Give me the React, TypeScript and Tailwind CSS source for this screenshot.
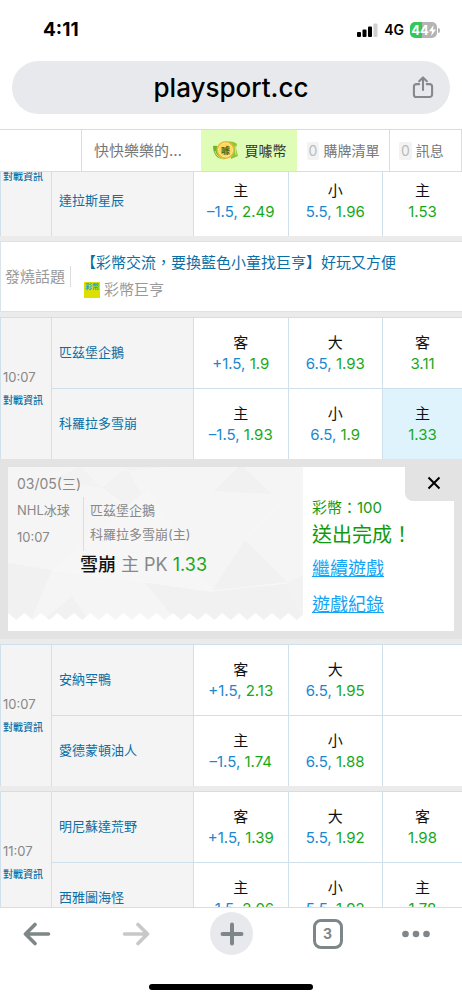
interface Pick {
  side: string;
  line?: string;
  odds: string;
  selected?: boolean;
}
interface TeamRow {
  name: string;
  picks: (Pick | null)[];
}
interface Game {
  id: string;
  time?: string;
  rows: TeamRow[];
}

const games: Game[] = [
  {
    id: "stars",
    rows: [
      {
        name: "達拉斯星辰",
        picks: [
          { side: "主", line: "–1.5", odds: "2.49" },
          { side: "小", line: "5.5", odds: "1.96" },
          { side: "主", odds: "1.53" },
        ],
      },
    ],
  },
  {
    id: "avalanche",
    time: "10:07",
    rows: [
      {
        name: "匹茲堡企鵝",
        picks: [
          { side: "客", line: "+1.5", odds: "1.9" },
          { side: "大", line: "6.5", odds: "1.93" },
          { side: "客", odds: "3.11" },
        ],
      },
      {
        name: "科羅拉多雪崩",
        picks: [
          { side: "主", line: "–1.5", odds: "1.93" },
          { side: "小", line: "6.5", odds: "1.9" },
          { side: "主", odds: "1.33", selected: true },
        ],
      },
    ],
  },
  {
    id: "oilers",
    time: "10:07",
    rows: [
      {
        name: "安納罕鴨",
        picks: [{ side: "客", line: "+1.5", odds: "2.13" }, { side: "大", line: "6.5", odds: "1.95" }, null],
      },
      {
        name: "愛德蒙頓油人",
        picks: [{ side: "主", line: "–1.5", odds: "1.74" }, { side: "小", line: "6.5", odds: "1.88" }, null],
      },
    ],
  },
  {
    id: "kraken",
    time: "11:07",
    rows: [
      {
        name: "明尼蘇達荒野",
        picks: [
          { side: "客", line: "+1.5", odds: "1.39" },
          { side: "大", line: "5.5", odds: "1.92" },
          { side: "客", odds: "1.98" },
        ],
      },
      {
        name: "西雅圖海怪",
        picks: [
          { side: "主", line: "–1.5", odds: "2.06" },
          { side: "小", line: "5.5", odds: "1.92" },
          { side: "主", odds: "1.78" },
        ],
      },
    ],
  },
];

function StatusBar() {
  return (
    <div className="flex h-[60px] items-center justify-between pr-[22px] pl-[43px]">
      <span className="text-[19px] font-bold">4:11</span>
      <div className="flex items-center gap-[6px]">
        <svg width="21" height="14" viewBox="0 0 21 14">
          <rect x="0" y="9" width="4" height="5" rx="1" />
          <rect x="5.5" y="6.5" width="4" height="7.5" rx="1" />
          <rect x="11" y="3.5" width="4" height="10.5" rx="1" />
          <rect x="16.5" y="0.5" width="4" height="13.5" rx="1" fill="#d0d0d0" />
        </svg>
        <span className="text-sm font-semibold">4G</span>
        <div className="flex items-center gap-px">
          <div className="flex h-4 w-[27px] items-center justify-center rounded-[5px] bg-linear-to-r from-[#35c759] from-45% to-[#b4b4b4] to-45% text-white">
            <span className="text-[13px] leading-4 font-bold">44</span>
            <svg width="7" height="11" viewBox="0 0 7 11" fill="currentColor">
              <path d="M4.6 0 0 6.2h3L2.2 11 7 4.6H4z" />
            </svg>
          </div>
          <span className="h-[5px] w-[2px] rounded-r bg-[#b4b4b4]" />
        </div>
      </div>
    </div>
  );
}

function AddressBar() {
  return (
    <div className="mx-3 mt-px flex h-[53px] items-center rounded-full bg-[#e8e9ed] pr-4 pl-[38px]">
      <span className="flex-1 text-center text-[26px] font-medium">playsport.cc</span>
      <button aria-label="分享">
        <svg width="22" height="23" viewBox="0 0 23 24" fill="none" stroke="#85898e" strokeWidth="2.200" strokeLinecap="round" strokeLinejoin="round">
          <path d="M7.500 8.500H4.500A2.500 2.500 0 0 0 2 11v8.500A2.500 2.500 0 0 0 4.500 22h14a2.500 2.500 0 0 0 2.500-2.500V11a2.500 2.500 0 0 0-2.500-2.500h-3" />
          <path d="M11.500 14.500V2M7.500 5.500l4-4 4 4" />
        </svg>
      </button>
    </div>
  );
}

function CoinIcon() {
  return (
    <svg width="27" height="21" viewBox="0 0 27 21">
      <path d="M1 6c4-1 6 0 9 3l4 10C6 20 1 15 1 6z" fill="#6fb52c" />
      <path d="M15 2c4-1 8 0 10 2l-1 4 2 8-7 3z" fill="#8cc63a" />
      <path d="M3 11c1 4 4 7 9 8M23 6l1 9" stroke="#d8ef6a" fill="none" />
      <circle cx="13.500" cy="10" r="9" fill="#f2b632" />
      <circle cx="13.500" cy="10" r="7" fill="#ffd85c" stroke="#fbe99b" />
      <text x="13.500" y="13.500" textAnchor="middle" fontSize="9" fontWeight="bold" fill="#4b6a1c">噱</text>
    </svg>
  );
}

function SiteNav() {
  return (
    <nav className="flex h-[43px] border-y border-[#dcdcdc] text-sm text-[#777]">
      <div className="w-[82px] border-r border-[#dcdcdc]" />
      <a href="#me" className="flex flex-1 items-center pl-3 text-[15px]">快快樂樂的…</a>
      <a href="#coin" className="flex w-[96px] items-center justify-center gap-[6px] bg-[#e0fdb8] text-[#333]">
        <CoinIcon />
        買噱幣
      </a>
      <a href="#cart" className="flex w-[93px] items-center justify-center gap-1 border-r border-[#dcdcdc]">
        <span className="rounded-xs bg-[#f3f3f3] px-[2px] leading-[18px] text-[#bbb]">0</span>
        購牌清單
      </a>
      <a href="#inbox" className="flex w-[72px] items-center gap-1 border-r border-[#dcdcdc] pl-[9px]">
        <span className="rounded-xs bg-[#f3f3f3] px-[2px] leading-[18px] text-[#bbb]">0</span>
        訊息
      </a>
    </nav>
  );
}

function PickButton({ pick }: { pick: Pick }) {
  return (
    <button className="w-full text-[15px] leading-[21px]">
      <span className="block text-[#111]">{pick.side}</span>
      {pick.line && <span className="text-[#1a87cf]">{pick.line}, </span>}
      <span className="text-[#17a817]">{pick.odds}</span>
    </button>
  );
}

function GameTable({ game }: { game: Game }) {
  return (
    <table className="w-full table-fixed border-separate border-spacing-0 border-l border-[#cfe0ea] bg-white">
      <colgroup>
        <col className="w-[50px]" />
        <col className="w-[142px]" />
        <col className="w-[20.5%]" />
        <col className="w-[20.5%]" />
        <col />
      </colgroup>
      <tbody>
        {game.rows.map((row, i) => (
          <tr key={row.name}>
            {i === 0 && (
              <td rowSpan={game.rows.length} className={game.time ? "border-t border-[#cfe0ea] bg-[#f4f4f4] pb-[2px] pl-[2px]" : "bg-[#f4f4f4] pl-[2px] align-top"}>
                {game.time && <div className="text-[13px] leading-6 text-[#888]">{game.time}</div>}
                <a href={`#${game.id}`} className="block text-[10px] leading-[22px] font-medium text-[#0a6fa5]">對戰資訊</a>
              </td>
            )}
            <th scope="row" className="h-[71px] border-t border-l border-[#cfe0ea] bg-[#f4f4f4] pl-[7px] text-left text-[13px] font-normal text-[#0a6fa5]">
              {row.name}
            </th>
            {row.picks.map((pick, j) => (
              <td key={j} className={pick?.selected ? "border-t border-l border-[#cfe0ea] bg-[#dff3fd]" : "border-t border-l border-[#cfe0ea]"}>
                {pick && <PickButton pick={pick} />}
              </td>
            ))}
          </tr>
        ))}
      </tbody>
    </table>
  );
}

function HotTopic() {
  return (
    <div className="my-[5px] flex h-[71px] items-center border-y border-l border-[#d9e3ea] bg-white pl-1 text-[15px]">
      <span className="border-r border-[#ddd] pr-[5px] leading-[21px] text-[#999]">發燒話題</span>
      <div className="pb-[2px] pl-[10px]">
        <a href="#topic" className="block leading-7 text-[#0a6fa5]">【彩幣交流，要換藍色小童找巨亨】好玩又方便</a>
        <div className="flex items-center gap-1 pl-[3px] leading-[26px] text-[#999]">
          <span className="h-4 w-4 bg-[#dbe000] text-center text-[7px] leading-[9px] font-bold text-[#27a5c9]">彩幣</span>
          彩幣巨亨
        </div>
      </div>
    </div>
  );
}

// faceted paper pattern with a torn bottom edge
function TicketPaper() {
  return (
    <svg className="absolute inset-0 h-full w-full" viewBox="0 0 295 153" preserveAspectRatio="none">
      <defs>
        <pattern id="teeth" width="16.500" height="7" x="0" y="146" patternUnits="userSpaceOnUse">
          <path d="M0 0 8.250 7 16.500 0V7H0z" fill="#fff" />
        </pattern>
      </defs>
      <path d="M0 0h295v153H0z" fill="#f5f5f5" />
      <path d="M0 96 44 103 23 153H0zM36 153l28-24 16 24zM136 115l68 10 18 28H168z" fill="#f1f1f1" />
      <path d="M204 124 237 73l42 42zM204 124l75-8 16 37h-79zM206 24 230 0h5l29 27z" fill="#f1f1f1" />
      <path d="M72 0 94 21 45 12zM94 21l60 42-36-63h40l-44 4z" fill="#f2f2f2" />
      <path d="M44 103l96-82 64 103-68-9z" fill="#f6f6f6" />
      <path d="M94 21l110 103M44 103l160 21 75-8 16-8M237 73l35-35" stroke="#f8f8f8" fill="none" />
      <path d="M279 115l16-7v45z" fill="#f2f2f2" />
      <path d="M0 146h295v7H0z" fill="url(#teeth)" />
    </svg>
  );
}

function BetSlip() {
  return (
    <div className="relative mb-[5px] bg-[#e3e3e3] p-2">
      <div className="flex h-[164px] bg-white">
        <div className="relative h-[153px] w-[295px] text-[#888]">
          <TicketPaper />
          <div className="relative pt-1 pl-[9px]">
            <div className="text-sm leading-[26px]">03/05(三)</div>
            <div className="flex text-[13px]">
              <div className="w-[66px] leading-[27px]">
                <div>NHL冰球</div>
                <div>10:07</div>
              </div>
              <div className="border-l border-[#ddd] pt-px pl-[6px] leading-6">
                <div>匹茲堡企鵝</div>
                <div>科羅拉多雪崩(主)</div>
              </div>
            </div>
            <div className="pl-[63px] text-lg leading-7">
              <span className="font-medium text-[#111]">雪崩</span> 主 PK <span className="text-[#17a817]">1.33</span>
            </div>
          </div>
        </div>
        <div className="pt-7 pl-[9px] text-[#109a10]">
          <div className="text-[15px] leading-[26px]">彩幣：100</div>
          <div className="text-xl leading-7">送出完成！</div>
          <a href="#continue" className="mt-[2px] block text-lg leading-9 text-[#15a4f5] underline">繼續遊戲</a>
          <a href="#history" className="block text-lg leading-9 text-[#15a4f5] underline">遊戲紀錄</a>
        </div>
      </div>
      <button aria-label="關閉" className="absolute top-0 right-0 flex h-[42px] w-[57px] items-center justify-center rounded-bl-lg bg-[#e3e3e3] pt-[5px]">
        <svg width="14" height="14" viewBox="0 0 14 14" stroke="#000" strokeWidth="2">
          <path d="M1.500 1.500l11 11M12.500 1.500l-11 11" />
        </svg>
      </button>
    </div>
  );
}

function BrowserToolbar() {
  return (
    <footer className="shrink-0 border-t border-[#dadcde] bg-white">
      <div className="flex h-[51px] items-center justify-between pr-8 pl-[13px] text-[#7f8689]">
        <button aria-label="上一頁" className="flex w-12 justify-center">
          <svg width="28" height="24" viewBox="0 0 28 24" fill="none" stroke="currentColor" strokeWidth="3.600" strokeLinecap="round" strokeLinejoin="round">
            <path d="M25.500 12H3M12 2.500 2.500 12l9.500 9.500" />
          </svg>
        </button>
        <button aria-label="下一頁" className="flex w-12 justify-center text-[#c8c8c8]">
          <svg width="28" height="24" viewBox="0 0 28 24" fill="none" stroke="currentColor" strokeWidth="3.600" strokeLinecap="round" strokeLinejoin="round">
            <path d="M2.500 12H25M16 2.500l9.500 9.500-9.500 9.500" />
          </svg>
        </button>
        <button aria-label="新分頁" className="flex h-[43px] w-[43px] items-center justify-center rounded-full bg-[#e8e9ed]">
          <svg width="24" height="24" viewBox="0 0 24 24" stroke="currentColor" strokeWidth="4" strokeLinecap="round">
            <path d="M12 2.500v19M2.500 12h19" />
          </svg>
        </button>
        <button aria-label="分頁" className="flex w-12 justify-center">
          <span className="flex h-[30px] w-[30px] items-center justify-center rounded-lg border-3 border-current text-sm font-bold">3</span>
        </button>
        <button aria-label="更多">
          <svg width="28" height="8" viewBox="0 0 28 8" fill="currentColor">
            <circle cx="3.500" cy="4" r="3.300" />
            <circle cx="14" cy="4" r="3.300" />
            <circle cx="24.500" cy="4" r="3.300" />
          </svg>
        </button>
      </div>
      <div className="flex justify-center pt-[25px] pb-[10px]">
        <div className="h-[6px] w-[164px] rounded-full bg-black" />
      </div>
    </footer>
  );
}

export default function App() {
  return (
    <div className="flex h-screen flex-col overflow-hidden bg-white font-['Inter','Noto_Sans_CJK_TC',sans-serif] text-black">
      <header className="shrink-0">
        <StatusBar />
        <AddressBar />
        <div className="mt-[15px] shadow-xs">
          <SiteNav />
        </div>
      </header>
      <main className="min-h-0 flex-1 overflow-hidden bg-[#ebebeb]">
        <div className="-mt-[7px]">
          <GameTable game={games[0]} />
          <HotTopic />
          <GameTable game={games[1]} />
          <BetSlip />
          <div className="flex flex-col gap-[5px]">
            <GameTable game={games[2]} />
            <GameTable game={games[3]} />
          </div>
        </div>
      </main>
      <BrowserToolbar />
    </div>
  );
}
